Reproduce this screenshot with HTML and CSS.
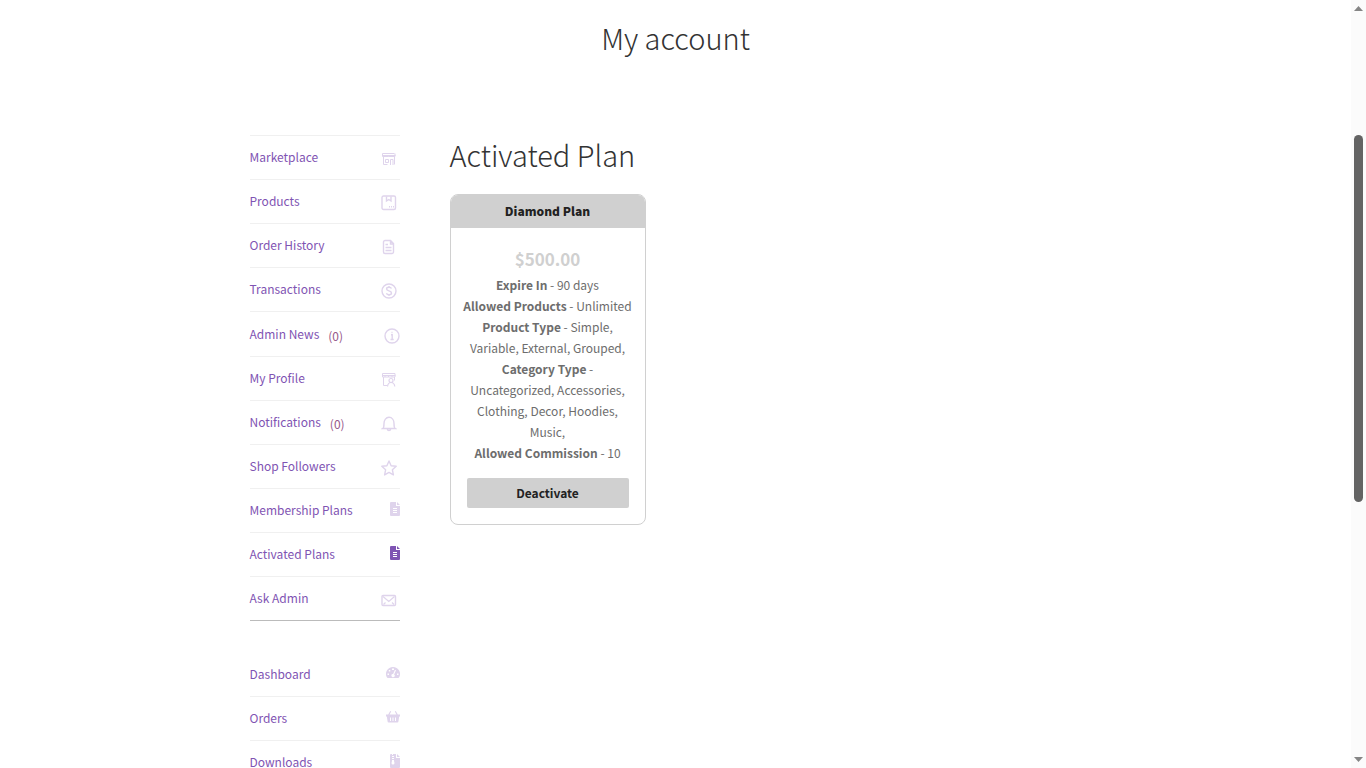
FILE: index.html
```html
<!DOCTYPE html>
<html lang="en">
<head>
<meta charset="utf-8">
<title>My account</title>
<link rel="stylesheet" href="styles.css">
</head>
<body>
<div class="page">
  <header class="page-header"><h1>My account</h1></header>
  <div class="columns">
    <nav class="account-nav" aria-label="Account">
      <ul class="menu menu-seller">
        <li><a href="#">Marketplace</a>
          <svg class="icon line" viewBox="0 0 16 16"><path stroke-width="1" d="M1.500 2.500h12M1 4.500h13.500M1.500 2.500v3h2.500v-1M4 5.500h3.500v-1M7.500 5.500H11v-1M11 5.500h3v-3M2.500 6v7.500h4M13.500 6v7.500M4.500 8.500h3v3h-3zM9.500 14V8.500h2.500V14"/></svg></li>
        <li><a href="#">Products</a>
          <svg class="icon line" viewBox="0 0 16 16"><rect x="1" y="1" width="13.500" height="13.500" rx="1.500"/><path d="M5.500 1.500v4.500L7.800 4.500 10 6V1.500M8 11.800h1M10 11.800h1M12 11.800h1"/></svg></li>
        <li><a href="#">Order History</a>
          <svg class="icon line" viewBox="0 0 16 16"><path d="M4 1.500h5.500l3 3v8.500a1.500 1.500 0 0 1-1.500 1.500H4A1.500 1.500 0 0 1 2.500 13V3A1.500 1.500 0 0 1 4 1.500zM9.500 1.500V5h3M4.500 5.500H7M4.500 8.500h6M4.500 11.500h6"/></svg></li>
        <li><a href="#">Transactions</a>
          <svg class="icon line" viewBox="0 0 16 16"><circle cx="8" cy="8" r="7"/><path d="M10.500 5.500C10 4.500 9 4.300 8 4.300c-1.300 0-2.400.6-2.400 1.700C5.600 8.400 10.500 7.300 10.500 9.900c0 1.200-1.200 1.800-2.500 1.800s-2.200-.5-2.600-1.500M8 3v1.300M8 11.700V13"/></svg></li>
        <li class="tall"><a href="#">Admin News</a><span class="count">(0)</span>
          <svg class="icon line flush" viewBox="0 0 16 16"><circle cx="8" cy="8" r="7"/><path d="M7 6.800h1.200v4.700M6.500 11.500h3.200M7.500 4.500h1"/></svg></li>
        <li><a href="#">My Profile</a>
          <svg class="icon line" viewBox="0 0 16 16"><path stroke-width="1" d="M1.500 1.500h12.500M1 3.500h13.500M1.500 1.500v3.500h2.500V3.500M4 5h3.500V3.500M7.500 5H11V3.500M11 5h3V1.500M2.500 5v8.500h3.500M13.500 5v3.500"/><circle stroke-width="1.200" cx="10" cy="8.500" r="2"/><path stroke-width="1.200" d="M6.500 14.500c.3-2.500 1.500-4 3.500-4s3.500 1.500 3.800 4"/></svg></li>
        <li><a href="#">Notifications</a><span class="count">(0)</span>
          <svg class="icon line" viewBox="0 0 16 16"><path d="M1.800 12.500c1.200-.8 1.200-2.500 1.200-5C3 4 5 1.300 8 1.300s5 2.700 5 6.200c0 2.500 0 4.200 1.200 5zM6.200 12.800c.2 1 1 1.700 1.800 1.700s1.600-.7 1.800-1.700"/></svg></li>
        <li><a href="#">Shop Followers</a>
          <svg class="icon line" viewBox="0 0 16 16"><path stroke-linejoin="round" d="M8 1l2.100 4.700 5.100.6-3.800 3.500 1 5.100L8 12.400l-4.400 2.500 1-5.100L.8 6.300l5.100-.6z"/></svg></li>
        <li><a href="#">Membership Plans</a>
          <svg class="icon solid narrow" viewBox="0 0 10 14"><path fill-rule="evenodd" d="M1 0h5v4h4v9a1 1 0 0 1-1 1H1a1 1 0 0 1-1-1V1a1 1 0 0 1 1-1zM3 6v1h4V6zm0 2v1h4V8zm0 2v1h4v-1zM7 0l3 3H7z"/></svg></li>
        <li><a href="#" aria-current="page">Activated Plans</a>
          <svg class="icon solid narrow current" viewBox="0 0 10 14"><path fill-rule="evenodd" d="M1 0h5v4h4v9a1 1 0 0 1-1 1H1a1 1 0 0 1-1-1V1a1 1 0 0 1 1-1zM3 6v1h4V6zm0 2v1h4V8zm0 2v1h4v-1zM7 0l3 3H7z"/></svg></li>
        <li><a href="#">Ask Admin</a>
          <svg class="icon line" viewBox="0 0 16 16"><rect x="1" y="3.500" width="13.500" height="10" rx="1"/><path stroke-width="1.200" d="M2 4.500l5.800 5 5.700-5M2.500 12.500l2-2M13 12.500l-2-2"/></svg></li>
      </ul>
      <ul class="menu">
        <li><a href="#">Dashboard</a>
          <svg class="icon solid" viewBox="0 0 14 14"><path fill-rule="evenodd" d="M7 1a7 7 0 0 0-6 10.600c.2.300.4.400.7.400h10.600c.3 0 .5-.1.700-.4A7 7 0 0 0 7 1zM6 2.500h2V4H6zM2.800 4h1.500v1.500H2.800zM1.500 7.500H3V9H1.500zM11 7.500h1.500V9H11zM9 3.800l1 .4-1.900 4.200a1.600 1.600 0 1 1-1-.4z"/></svg></li>
        <li><a href="#">Orders</a>
          <svg class="icon solid" viewBox="0 0 14 14"><path fill-rule="evenodd" d="M4.200 1l1 .6L3.600 4.500h6.800L8.800 1.600l1-.6 2 3.500H14v2h-.8l-.8 5a1 1 0 0 1-1 1H2.600a1 1 0 0 1-1-1l-.8-5H0v-2h2.200zM4 7.500V11h1V7.500zm2.500 0V11h1V7.500zM9 7.500V11h1V7.500z"/></svg></li>
        <li><a href="#">Downloads</a>
          <svg class="icon solid narrow" viewBox="0 0 10 14"><path fill-rule="evenodd" d="M1 0h1v1h1V0h3v4h4v9a1 1 0 0 1-1 1H1a1 1 0 0 1-1-1V1a1 1 0 0 1 1-1zM3 1v1H2v1h1v1H2v1h1v1H2v1l-.5 2a1.500 1.500 0 1 0 3 0L4 7V6H3V5h1V4H3V3h1V2H3zM7 0l3 3H7z"/></svg></li>
      </ul>
    </nav>
    <main class="content">
      <h2>Activated Plan</h2>
      <article class="plan">
        <h3>Diamond Plan</h3>
        <div class="plan-body">
          <p class="price">$500.00</p>
          <p><strong>Expire In</strong> - 90 days</p>
          <p><strong>Allowed Products</strong> - Unlimited</p>
          <p><strong>Product Type</strong> - Simple, Variable, External, Grouped,</p>
          <p><strong>Category Type</strong> - Uncategorized, Accessories, Clothing, Decor, Hoodies, Music,</p>
          <p><strong>Allowed Commission</strong> - 10</p>
        </div>
        <div class="plan-action"><button type="button">Deactivate</button></div>
      </article>
    </main>
  </div>
</div>
<div class="scrollbar" aria-hidden="true">
  <svg viewBox="0 0 9 5"><path d="M0 5L4.500 0 9 5z"/></svg>
  <div class="track"><div class="thumb"></div></div>
  <svg viewBox="0 0 9 5"><path d="M0 0h9L4.500 5z"/></svg>
</div>
</body>
</html>
```

FILE: styles.css
```css
* { box-sizing: border-box; }

body {
  margin: 0;
  display: flex;
  height: 100vh;
  overflow: hidden;
  background: #fff;
  color: #6d6d6d;
  font-family: "Source Sans Pro", "Noto Sans CJK SC", "Open Sans", sans-serif;
  font-size: 12px;
  line-height: 21px;
}

h1, h2, h3, p, ul { margin: 0; padding: 0; }

.page { flex: 1; min-width: 0; overflow: hidden; }

.page-header { padding: 15px 0 76px; text-align: center; }

h1, h2 {
  color: #333;
  font-size: 29px;
  font-weight: 300;
  line-height: 44px;
}

h2 { line-height: 38px; }

.columns {
  display: flex;
  gap: 50px;
  max-width: 852px;
  margin: 0 auto;
}

.account-nav { flex: 0 0 150px; }

.menu { list-style: none; }

.menu li {
  display: flex;
  align-items: center;
  height: 44px;
  padding-bottom: 2px;
  border-bottom: 1px solid #f0f0f0;
}

.menu li.tall { height: 45px; }

.menu a { color: #7f54b3; text-decoration: none; }

.menu-seller {
  border-top: 1px solid #f0f0f0;
  margin-bottom: 32px;
}

.menu-seller li:last-child { border-bottom-color: #bbb; }

.count { margin: 4px 0 0 9px; color: #96588a; }

.icon { margin-left: auto; }

.line {
  width: 16px;
  height: 16px;
  margin-top: 5px;
  margin-right: 3px;
  fill: none;
  stroke: #dfd4ec;
  stroke-width: 1.4;
}

.line.flush { margin-right: 0; }

.solid {
  width: 14px;
  height: 14px;
  fill: #dfd4ec;
  margin-bottom: 2px;
}

.narrow { width: 10px; }

.current { fill: #7f54b3; }

.content { flex: 1; min-width: 0; }

.plan {
  width: 196px;
  margin-top: 21px;
  overflow: hidden;
  border: 1px solid #d0d0d0;
  border-radius: 8px;
  text-align: center;
}

.plan h3 {
  padding-bottom: 2px;
  background: #d0d0d0;
  color: #222;
  font-size: 12px;
  font-weight: 900;
  line-height: 31px;
}

.plan-body { padding: 15px 12px 0; }

.plan .price {
  color: #d0d0d0;
  font-size: 17px;
  font-weight: 700;
  line-height: 31px;
}

.plan strong { font-weight: 700; }

.plan-action { padding: 15px 16px 16px; }

.plan button {
  display: block;
  width: 100%;
  height: 30px;
  padding: 0 0 2px;
  border: 0;
  border-radius: 2px;
  background: #d0d0d0;
  color: #222;
  font: inherit;
  font-weight: 700;
}

.scrollbar {
  flex: 0 0 15px;
  display: flex;
  flex-direction: column;
  align-items: center;
  padding: 6px 0;
  background: #fbfbfb;
}

.scrollbar svg { width: 9px; height: 5px; fill: #858585; }

.track { flex: 1; padding-top: 124px; }

.thumb {
  width: 9px;
  height: 59%;
  border-radius: 5px;
  background: #636363;
}
```
